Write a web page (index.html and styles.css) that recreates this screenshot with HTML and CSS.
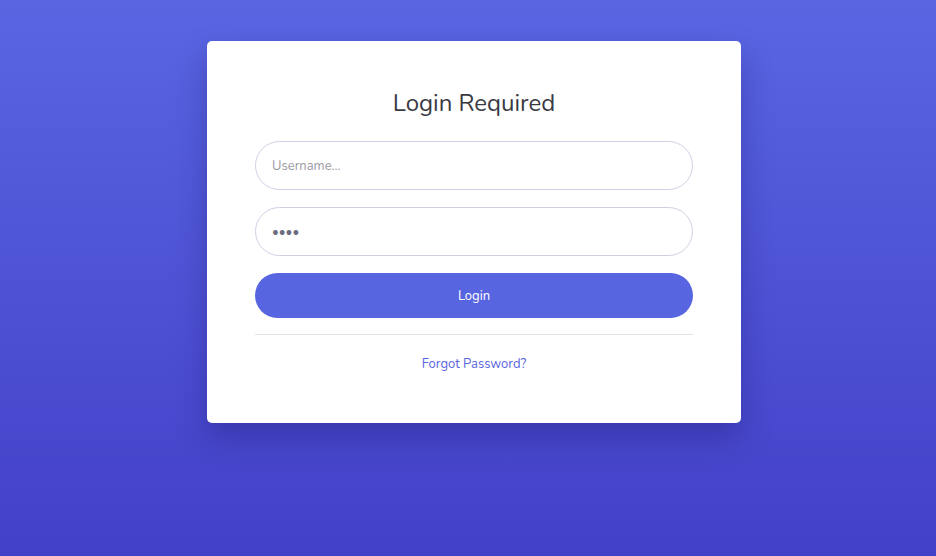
FILE: index.html
```html
<!DOCTYPE html>
<html lang="en">
<head>
    <meta charset="UTF-8">
    <meta name="viewport" content="width=device-width, initial-scale=1.0">
    <title>Login</title>
    <link rel="stylesheet" href="styles.css">
</head>
<body>
    <div id="page">
        <form class="login-card" onsubmit="return false">
            <h1 class="login-title">Login Required</h1>
            <input class="login-input" type="text" placeholder="Username...">
            <input class="login-input password" type="password" value="1234">
            <button class="login-button" type="submit">Login</button>
            <div class="login-divider"></div>
            <a class="forgot-link" href="#">Forgot Password?</a>
        </form>
    </div>
</body>
</html>
```

FILE: styles.css
```css
body {
    margin: 0;
    font-family: "Nunito", Lato, "Noto Sans", sans-serif;
}

#page {
    min-height: 100vh;
    background: linear-gradient(to bottom, #5966e2 0%, #4340c8 100%);
    display: flex;
    justify-content: center;
    align-items: flex-start;
    padding: 41px 0 0 12px;
    box-sizing: border-box;
}

.login-card {
    width: 534px;
    box-sizing: border-box;
    background-color: #ffffff;
    border-radius: 5px;
    padding: 48px 48px 50px;
    display: flex;
    flex-direction: column;
    box-shadow: 0 15px 30px rgba(30, 25, 110, 0.35);
}

.login-title {
    margin: 0 0 23px;
    font-size: 24px;
    line-height: 29px;
    font-weight: 400;
    color: #3a3a44;
    text-align: center;
}

.login-input {
    height: 49px;
    box-sizing: border-box;
    border: 1px solid #d2cfe4;
    border-radius: 25px;
    padding: 0 16px;
    font-family: inherit;
    font-size: 13px;
    color: #6c6c80;
    outline: none;
    margin-bottom: 17px;
}

.login-input::placeholder {
    color: #9a9aa2;
}

.login-button {
    height: 45px;
    border: none;
    border-radius: 23px;
    background-color: #5865e0;
    color: #ffffff;
    font-family: inherit;
    font-size: 13px;
    cursor: pointer;
}

.login-divider {
    height: 1px;
    background-color: #e2e2e6;
    margin: 16px 0 20px;
}

.forgot-link {
    font-size: 13px;
    line-height: 18px;
    color: #5865e0;
    text-decoration: none;
    text-align: center;
}
```
